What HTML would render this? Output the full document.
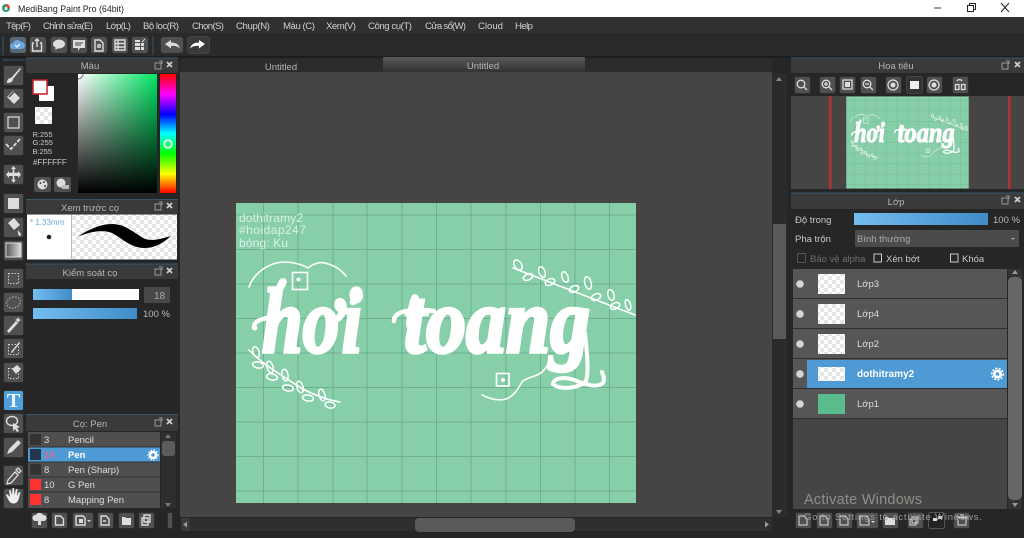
<!DOCTYPE html>
<html><head><meta charset="utf-8"><title>MediBang Paint Pro</title>
<style>html,body{margin:0;padding:0;background:#222;overflow:hidden}svg{display:block}
text{font-family:"Liberation Sans","Noto Sans CJK SC",sans-serif;font-size:9.5px;fill:#c9c9c9}
.t{text-anchor:middle;fill:#b5b5b5}.m{fill:#d0d0d0;font-size:9.6px}.w{fill:#ddd}
.i{fill:none;stroke:#ddd;stroke-width:1.4}.f{fill:#ddd}</style></head><body>
<svg xmlns="http://www.w3.org/2000/svg" width="1024" height="538" viewBox="0 0 1024 538">
<defs>
<pattern id="ch" width="8" height="8" patternUnits="userSpaceOnUse"><rect width="8" height="8" fill="#fff"/><rect width="4" height="4" fill="#e6e6e6"/><rect x="4" y="4" width="4" height="4" fill="#e6e6e6"/></pattern>
<linearGradient id="bl" x1="0" x2="1" y1="0" y2="0"><stop offset="0" stop-color="#74bdf0"/><stop offset="1" stop-color="#3f8cc8"/></linearGradient>
<linearGradient id="sv1" x1="0" x2="1" y1="0" y2="0"><stop offset="0" stop-color="#fff"/><stop offset="1" stop-color="#00e765"/></linearGradient>
<linearGradient id="sv2" x1="0" x2="0" y1="0" y2="1"><stop offset="0" stop-color="#000" stop-opacity="0"/><stop offset="1" stop-color="#000"/></linearGradient>
<linearGradient id="hue" x1="0" x2="0" y1="0" y2="1"><stop offset="0" stop-color="#f00"/><stop offset=".17" stop-color="#f0f"/><stop offset=".34" stop-color="#00f"/><stop offset=".5" stop-color="#0ff"/><stop offset=".67" stop-color="#0f0"/><stop offset=".84" stop-color="#ff0"/><stop offset="1" stop-color="#f00"/></linearGradient>
<linearGradient id="gr" x1="0" x2="1" y1="0" y2="0"><stop offset="0" stop-color="#555"/><stop offset="1" stop-color="#ddd"/></linearGradient>
<linearGradient id="tab" x1="0" x2="0" y1="0" y2="1"><stop offset="0" stop-color="#585858"/><stop offset="1" stop-color="#333"/></linearGradient>
<symbol id="art" viewBox="0 0 400 300" width="400" height="300" overflow="hidden">
<rect width="400" height="300" fill="#87cfa9"/>
<g stroke="#6cb28f" stroke-width="1" fill="none">
<path d="M27.500 0V300M62 0V300M97 0V300M131 0V300M166 0V300M200.500 0V300M235 0V300M270 0V300M304.500 0V300M339 0V300M373.500 0V300"/>
<path d="M0 12H400M0 46.500H400M0 81H400M0 115.500H400M0 150H400M0 184.500H400M0 219H400M0 253.500H400M0 288H400"/>
</g>
<g fill="none" stroke="#fff" stroke-width="1.600" stroke-linecap="round">
<path d="M13 84C18 70 32 60 47 59C57 59 65 61 72 65C78 60 86 58 92 61C100 63 106 68 110 73"/>
<rect x="56.500" y="69.500" width="15" height="17"/>
<path d="M246 192C254 196 263 198 270 196C278 193 282 186 286 179C290 174 302 174 307 168C310 165 312 162 312 160"/>
<rect x="260.500" y="170.500" width="12.500" height="12.500"/>
<path d="M13 147C25 160 45 172 65 185C78 192 92 197 104 199"/>
<g stroke-width="1.500">
<ellipse cx="20" cy="149" rx="3" ry="5.500" transform="rotate(-20 20 149)"/><ellipse cx="22" cy="162" rx="5.500" ry="3" transform="rotate(10 22 162)"/>
<ellipse cx="34" cy="164" rx="3" ry="6" transform="rotate(-15 34 164)"/><ellipse cx="36" cy="174" rx="5.500" ry="3" transform="rotate(10 36 174)"/>
<ellipse cx="49" cy="172" rx="3" ry="6" transform="rotate(-10 49 172)"/><ellipse cx="52" cy="185" rx="5.500" ry="3" transform="rotate(10 52 185)"/>
<ellipse cx="64" cy="184" rx="3" ry="6" transform="rotate(-15 64 184)"/><ellipse cx="72" cy="195" rx="5.500" ry="3" transform="rotate(10 72 195)"/>
<ellipse cx="86" cy="192" rx="3" ry="6" transform="rotate(-15 86 192)"/><ellipse cx="94" cy="202" rx="5" ry="3" transform="rotate(10 94 202)"/>
</g>
<path d="M277 65L399 112"/>
<g stroke-width="1.500">
<ellipse cx="282" cy="62" rx="3.500" ry="5.500" transform="rotate(-35 282 62)"/><ellipse cx="292" cy="74" rx="5" ry="3" transform="rotate(-25 292 74)"/>
<ellipse cx="306" cy="69" rx="3" ry="5.500" transform="rotate(-20 306 69)"/><ellipse cx="314" cy="79" rx="5" ry="3" transform="rotate(-25 314 79)"/>
<ellipse cx="329" cy="74" rx="3" ry="5.500" transform="rotate(-20 329 74)"/><ellipse cx="338" cy="86" rx="5" ry="3" transform="rotate(-25 338 86)"/>
<ellipse cx="352" cy="80" rx="3.200" ry="6.500" transform="rotate(-15 352 80)"/><ellipse cx="360" cy="94" rx="5" ry="3" transform="rotate(-25 360 94)"/>
<ellipse cx="375" cy="92" rx="3" ry="5.500" transform="rotate(-15 375 92)"/><ellipse cx="379" cy="103" rx="5" ry="3" transform="rotate(-25 379 103)"/>
<ellipse cx="392" cy="102" rx="2.500" ry="5.500" transform="rotate(-15 392 102)"/>
</g>
<!-- flourishes -->
<path d="M18 125C17 118 26 115 40 114" stroke-width="4.500"/>
<circle cx="19" cy="125" r="2.500" fill="#fff" stroke="none"/>
<path d="M47 79C40 90 36 105 35 125" stroke-width="8"/>
<path d="M158 118C158 110 168 105 198 108" stroke-width="4.500"/>
<path d="M179 95C176 103 175 110 174 122" stroke-width="8"/>
<path d="M349 130C351 150 353 168 350 178C343 186 322 187 317 181C318 174 330 174 338 177C346 180 360 186 367 180C369 176 367 172 366 169" stroke-width="4"/>
</g>
<g fill="#fff"><circle cx="62.500" cy="76.500" r="2"/><circle cx="267" cy="177" r="2"/><circle cx="117" cy="99" r="3.300"/></g>
</symbol>
</defs>

<rect width="1024" height="538" fill="#222"/>
<!-- title bar -->
<rect width="1024" height="17" fill="#fff"/><rect y="17" width="1024" height="1" fill="#333"/>
<circle cx="6" cy="8" r="4" fill="#2f9b6a"/><path d="M6 4a4 4 0 0 1 4 4H6z" fill="#e2533b"/><circle cx="6" cy="8.500" r="1.500" fill="#fff"/>
<text x="18" y="12" style="font-size:9.5px;fill:#222" textLength="106" lengthAdjust="spacingAndGlyphs">MediBang Paint Pro (64bit)</text>
<path d="M934 8H941" stroke="#333" stroke-width="1"/><path d="M967.500 5.500h6v6h-6zM969.500 5.500v-2h6v6h-2" fill="none" stroke="#222" stroke-width="1"/><path d="M1001 3L1009 12M1009 3L1001 12" stroke="#222" stroke-width="1"/>
<!-- menu -->
<rect y="18" width="1024" height="15" fill="#303030"/><rect y="33" width="1024" height="1" fill="#292929"/>
<g class="menu">
<text class="m" x="6" y="29" textLength="25">Tệp(F)</text><text class="m" x="43" y="29" textLength="50">Chỉnh sửa(E)</text><text class="m" x="106" y="29" textLength="25">Lớp(L)</text><text class="m" x="143" y="29" textLength="36">Bộ lọc(R)</text><text class="m" x="192" y="29" textLength="32">Chọn(S)</text><text class="m" x="236" y="29" textLength="34">Chụp(N)</text><text class="m" x="283" y="29" textLength="32">Màu (C)</text><text class="m" x="326" y="29" textLength="30">Xem(V)</text><text class="m" x="368" y="29" textLength="44">Công cụ(T)</text><text class="m" x="425" y="29" textLength="41">Cửa sổ(W)</text><text class="m" x="478" y="29" textLength="25">Cloud</text><text class="m" x="515" y="29" textLength="18">Help</text>
</g>
<!-- toolbar -->
<rect y="34" width="1024" height="22" fill="#2a2a2a"/><rect y="56" width="1024" height="2" fill="#1d1d1d"/>
<path d="M3 36V55M153 36V55" stroke="#36566e" stroke-width="1"/>
<g fill="#505050" stroke="#2e2e2e">
<rect x="9.500" y="36.500" width="17" height="17" rx="3" fill="#5a6672"/><rect x="29.500" y="36.500" width="17" height="17" rx="3"/><rect x="50.500" y="36.500" width="17" height="17" rx="3"/><rect x="70.500" y="36.500" width="17" height="17" rx="3"/><rect x="90.500" y="36.500" width="17" height="17" rx="3"/><rect x="111.500" y="36.500" width="17" height="17" rx="3"/><rect x="131.500" y="36.500" width="17" height="17" rx="3"/><rect x="160.500" y="36.500" width="23" height="17" rx="3"/><rect x="187.500" y="36.500" width="22" height="17" rx="3" fill="#3a3a3a" stroke="#444"/>
</g>
<path d="M13 49a3 3 0 0 1 0-6a4.500 4.500 0 0 1 8-1a3.500 3.500 0 0 1 1 7z" fill="#6aa7e0"/><path d="M15 45l2 2 3-3" stroke="#fff" stroke-width="1.200" fill="none"/>
<path class="i" d="M34 43h-1.500v8h9v-8H40M37 47V39M35 41l2-2 2 2"/>
<ellipse cx="59" cy="44" rx="6" ry="4.500" class="f"/><path d="M56 47l-1 3 4-2z" class="f"/>
<path d="M73 40h12v8h-5l-2 3v-3h-5z" class="f"/><path d="M75 43h8M75 45h6" stroke="#444"/>
<path class="i" d="M95 40h5l3 3v8h-8zM97 45h4M97 47h4" stroke-width="1"/>
<path class="i" d="M115 40h10v10h-10zM115 43.500h10M115 47h10M118 40v10" stroke-width="1"/>
<path d="M135 43h5v3h-5zM141 43h3v3h-3zM135 47h5v3h-5zM141 47h3v3h-3zM135 40h5v2h-5z" class="f"/><path d="M142 42l3-3" stroke="#ddd"/>
<path d="M165 44l6-4v2.500c5 0 8 2 9 6c-2-2-5-3-9-2.500v2.500z" class="f"/>
<path d="M205 44l-6-4v2.500c-5 0-8 2-9 6c2-2 5-3 9-2.500v2.500z" fill="#fff"/>

<!-- left tools -->
<rect x="0" y="58" width="26" height="480" fill="#262626"/>
<path d="M3 60H25" stroke="#36566e"/>
<g fill="#505050" stroke="#2e2e2e">
<rect x="3.500" y="65.500" width="20" height="20" rx="2"/><rect x="3.500" y="88.500" width="20" height="20" rx="2"/><rect x="3.500" y="112.500" width="20" height="20" rx="2"/><rect x="3.500" y="135.500" width="20" height="20" rx="2"/><rect x="3.500" y="164.500" width="20" height="20" rx="2"/><rect x="3.500" y="193.500" width="20" height="20" rx="2"/><rect x="3.500" y="217.500" width="20" height="20" rx="2"/><rect x="3.500" y="240.500" width="20" height="20" rx="2"/><rect x="3.500" y="268.500" width="20" height="20" rx="2"/><rect x="3.500" y="292.500" width="20" height="20" rx="2"/><rect x="3.500" y="315.500" width="20" height="20" rx="2"/><rect x="3.500" y="338.500" width="20" height="20" rx="2"/><rect x="3.500" y="362.500" width="20" height="20" rx="2"/><rect x="3.500" y="390.500" width="20" height="20" rx="2" fill="#4f9fda"/><rect x="3.500" y="413.500" width="20" height="20" rx="2"/><rect x="3.500" y="437.500" width="20" height="20" rx="2"/><rect x="3.500" y="465.500" width="20" height="20" rx="2"/><rect x="3.500" y="488.500" width="20" height="20" rx="2"/>
</g>
<path d="M7 83c0-4 2-5 4-5l9-10 1 1-8 10c0 3-3 4-6 4z" class="f"/>
<path d="M13 91l7 7-6 6-7-7z" class="f"/><path d="M9 97l5-5" stroke="#484848" stroke-width="1.500"/>
<rect x="8" y="117" width="11" height="11" fill="none" stroke="#ddd" stroke-width="1.200"/>
<path d="M6 144l5 5 9-10" fill="none" stroke="#ddd" stroke-width="1.800" stroke-dasharray="4 1.500"/>
<path d="M13.500 166l2.500 3h-1.700v3.700h3.700V171l3 3.500-3 3.500v-2h-3.700v3.700H16l-2.500 3-2.500-3h1.700v-3.700H9V178l-3-3.500 3-3.500v1.700h3.700V169H11z" class="f"/>
<rect x="8" y="198" width="11" height="11" class="f"/>
<path d="M8 223l6-5 6 7-6 5z" class="f"/><path d="M18 230c1 2 3 3 3 5s-4 1-3-5z" fill="#ddd"/>
<rect x="6" y="243" width="15" height="14" fill="url(#gr)" stroke="#ddd"/>
<rect x="8.500" y="273.500" width="10" height="10" fill="none" stroke="#ccc" stroke-dasharray="1.500 1.500"/>
<ellipse cx="13.500" cy="302.500" rx="7" ry="5.500" fill="none" stroke="#bbb" stroke-dasharray="1.500 1.500" transform="rotate(-20 13.500 302.500)"/>
<path d="M7 331l9-10 2 2-9 10z" class="f"/><path d="M18 317l1 2 2 1-2 1-1 2-1-2-2-1 2-1z" class="f"/>
<rect x="8.500" y="344.500" width="10" height="10" fill="none" stroke="#ccc" stroke-dasharray="1.500 1.500"/><path d="M11 352l8-10 1 1-8 10z" class="f"/>
<rect x="8.500" y="368.500" width="10" height="10" fill="none" stroke="#ccc" stroke-dasharray="1.500 1.500"/><path d="M12 369l5-4 4 4-5 5z" class="f"/>
<text x="13.500" y="407" style="font-family:'Liberation Serif',serif;font-size:20px;font-weight:bold;fill:#e9f4fb;text-anchor:middle">T</text>
<ellipse cx="12" cy="421" rx="5.500" ry="4.500" class="i"/><path d="M13 423l7 4-3 1 2 3-2 1-2-3-2 2z" class="f"/>
<path d="M7 454l2-5 9-9 3 3-9 9z" class="f"/>
<path d="M7 484l1-4 7-8 3 3-7 8zM16 470l2-2 3 3-2 2z" fill="none" stroke="#ddd" stroke-width="1.300"/>
<path d="M8 499l-2-4 1-1 3 3-1-7h1.500l1.500 5 .5-7h1.500l.5 7 1.500-6h1.500l-.5 7 2-4 1.500.5-2 7c-1 3-3 4-5 4s-4-1-5.500-4.500z" fill="#eee"/>

<!-- Colour panel -->
<rect x="26" y="58" width="154" height="480" fill="#262626"/>
<rect x="26" y="58" width="152" height="15" fill="#3a3a3a"/><path d="M26 58H178" stroke="#36566e"/>
<text class="t" x="90" y="69">Màu</text>
<path d="M155 63h6v6h-6z M159 61l3 0v3" fill="none" stroke="#999"/><path d="M167 62l5 5M172 62l-5 5" stroke="#ccc" stroke-width="1.800"/>
<rect x="39" y="86" width="15" height="15" fill="#fff"/>
<rect x="33" y="80" width="14" height="14" fill="#fff" stroke="#c5202a" stroke-width="1.500"/>
<rect x="35" y="107" width="17" height="17" fill="url(#ch)"/>
<text x="32.500" y="137" style="font-size:7.500px">R:255</text><text x="32.500" y="145" style="font-size:7.500px">G:255</text><text x="32.500" y="154" style="font-size:7.500px">B:255</text>
<text x="33" y="165" style="font-size:8px">#FFFFFF</text>
<rect x="34" y="177" width="17" height="15" rx="2" fill="#505050"/><rect x="54" y="177" width="17" height="15" rx="2" fill="#505050"/>
<circle cx="42.500" cy="184.500" r="5" class="f"/><circle cx="40.500" cy="183" r="1" fill="#444"/><circle cx="44" cy="182" r="1" fill="#444"/><circle cx="45" cy="186" r="1" fill="#444"/>
<circle cx="61" cy="183" r="4.500" class="f"/><rect x="62" y="185" width="7" height="4" fill="#bbb"/>
<rect x="78" y="74" width="79" height="119" fill="url(#sv1)"/><rect x="78" y="74" width="79" height="119" fill="url(#sv2)"/>
<path d="M78 79a5 5 0 0 0 5-5" stroke="#777" fill="none"/>
<rect x="160" y="74" width="16" height="119" fill="url(#hue)"/>
<circle cx="168" cy="144" r="3.800" fill="none" stroke="#d5f5df" stroke-width="2"/>
<!-- brush preview -->
<rect x="26" y="199" width="152" height="15" fill="#3a3a3a"/><path d="M26 199.500H178" stroke="#36566e"/>
<text class="t" x="90" y="211">Xem trước cọ</text>
<path d="M155 204h6v6h-6z M159 202l3 0v3" fill="none" stroke="#999"/><path d="M167 203l5 5M172 203l-5 5" stroke="#ccc" stroke-width="1.800"/>
<rect x="27" y="214.500" width="150" height="45" fill="#fff"/>
<rect x="72" y="214.500" width="105" height="45" fill="url(#ch)"/><path d="M71.500 215V260" stroke="#bbb"/>
<text x="30" y="225" style="font-size:8px;fill:#6aa7da">* 1.33mm</text>
<circle cx="49" cy="237" r="2.300" fill="#222"/>
<path d="M78 236.500C88 230 100 224 112 224C125 224 133 232 143 238C151 242 160 239 171 236C163 243 155 248 145 248C130 248 122 238 112 233C102 229 90 232 78 236.500z" fill="#000"/>
<!-- brush control -->
<rect x="26" y="264" width="152" height="15" fill="#3a3a3a"/><path d="M26 264H178" stroke="#36566e"/>
<text class="t" x="90" y="276">Kiểm soát cọ</text>
<path d="M155 269h6v6h-6z M159 267l3 0v3" fill="none" stroke="#999"/><path d="M167 268l5 5M172 268l-5 5" stroke="#ccc" stroke-width="1.800"/>
<rect x="33" y="289" width="106" height="11" fill="#fff"/><rect x="33" y="289" width="39" height="11" fill="url(#bl)"/>
<rect x="144" y="287" width="26" height="16" rx="1" fill="#484848"/><text x="154" y="299" style="fill:#aaa;font-size:10px">18</text>
<rect x="33" y="308" width="104" height="11" fill="url(#bl)"/>
<text x="143" y="317" style="fill:#bbb;font-size:9.500px">100 %</text>
<!-- brush list -->
<rect x="26" y="415" width="152" height="16" fill="#3a3a3a"/><path d="M26 414.500H178" stroke="#36566e"/>
<text class="t" x="90" y="427">Cọ: Pen</text>
<path d="M155 420h6v6h-6z M159 418l3 0v3" fill="none" stroke="#999"/><path d="M167 419l5 5M172 419l-5 5" stroke="#ccc" stroke-width="1.800"/>
<rect x="28" y="432" width="132" height="76" fill="#4f4f4f"/>
<rect x="28" y="447" width="132" height="15" fill="#4d9ad5"/>
<path d="M28 447H160M28 462H160M28 477H160M28 492H160" stroke="#333"/>
<g fill="#333"><rect x="30" y="434" width="11" height="11"/><rect x="30" y="449" width="11" height="11" fill="#26364a"/><rect x="30" y="464" width="11" height="11"/></g>
<g fill="#f33"><rect x="30" y="479" width="11" height="11"/><rect x="30" y="494" width="11" height="11"/></g>
<g style="font-size:9.500px">
<text x="44" y="443" class="w">3</text><text x="68" y="443" class="w">Pencil</text>
<text x="44" y="458" style="fill:#e8688a;font-weight:bold">10</text><text x="68" y="458" style="fill:#fff;font-weight:bold">Pen</text>
<text x="44" y="473" class="w">8</text><text x="68" y="473" class="w">Pen (Sharp)</text>
<text x="44" y="488" class="w">10</text><text x="68" y="488" class="w">G Pen</text>
<text x="44" y="503" class="w">8</text><text x="68" y="503" class="w">Mapping Pen</text>
</g>
<circle cx="153" cy="455" r="3" fill="none" stroke="#fff" stroke-width="2.500"/><circle cx="153" cy="455" r="5" fill="none" stroke="#fff" stroke-width="1.200" stroke-dasharray="1.500 1.500"/>
<rect x="161" y="432" width="15" height="76" fill="#2e2e2e"/><rect x="162" y="441" width="13" height="15" rx="3" fill="#5c5c5c"/>
<path d="M168 434l3 4h-6zM168 507l3-4h-6z" fill="#777"/>
<g fill="#505050" stroke="#2e2e2e"><rect x="31.500" y="512.500" width="16" height="16" rx="2"/><rect x="51.500" y="512.500" width="16" height="16" rx="2"/><rect x="72.500" y="512.500" width="21" height="16" rx="2"/><rect x="97.500" y="512.500" width="16" height="16" rx="2"/><rect x="118.500" y="512.500" width="16" height="16" rx="2"/><rect x="138.500" y="512.500" width="16" height="16" rx="2"/><rect x="167.500" y="512.500" width="5" height="16" rx="1"/></g>
<path d="M35 521a3 3 0 0 1 1-6a4 4 0 0 1 7 0a3 3 0 0 1 1 6h-3v4h-3v-4z" class="f"/>
<path class="i" d="M55.500 516h5l3 3v6h-8z" stroke-width="1"/>
<path class="i" d="M76 516h7l2 2v7h-9z" stroke-width="1"/><path d="M79 519h4v4h-4z" class="f"/><path d="M87 520h4l-2 2z" class="f"/>
<path class="i" d="M101 516h5l3 3v6h-8zM103 521h3" stroke-width="1"/>
<path d="M122 517h3l1 1h5v7h-9z" class="f"/>
<path class="i" d="M144 515h6v7h-6zM142 518h6v7h-6z" stroke-width="1"/>

<!-- canvas area -->
<rect x="180" y="58" width="608" height="480" fill="#262626"/>
<rect x="180" y="72" width="592" height="445" fill="#474543"/>
<rect x="181" y="58" width="202" height="14" fill="#2c2c2c"/><rect x="383" y="57" width="202" height="15" fill="url(#tab)"/><rect x="585" y="58" width="187" height="14" fill="#2c2c2c"/>
<text class="t" x="281" y="70">Untitled</text><text class="t" x="483" y="69">Untitled</text>
<use href="#art" x="236" y="203"/>
<text x="239" y="222" style="font-size:12px;fill:#d8f0e4" textLength="64">dothitramy2</text>
<text x="239" y="234" style="font-size:12px;fill:#d8f0e4" textLength="67">#hoidap247</text>
<text x="239" y="247" style="font-size:12px;fill:#d8f0e4" textLength="49">bóng: Ku</text>
<text x="262" y="352" textLength="100" lengthAdjust="spacingAndGlyphs" style="font-family:'Liberation Serif',serif;font-style:italic;font-weight:bold;font-size:92px;fill:#fff;stroke:#fff;stroke-width:3.500">hơi</text>
<text x="404" y="352" textLength="186" lengthAdjust="spacingAndGlyphs" style="font-family:'Liberation Serif',serif;font-style:italic;font-weight:bold;font-size:92px;fill:#fff;stroke:#fff;stroke-width:3.500">toang</text>
<!-- scrollbars -->
<rect x="772" y="74" width="15" height="443" fill="#2b2b2b"/><rect x="773" y="224" width="13" height="115" fill="#5a5a5a"/>
<path d="M779 77l3 4h-6zM779 514l3-4h-6z" fill="#888"/>
<rect x="181" y="518" width="591" height="13" fill="#2f2f2f"/><rect x="415" y="518" width="160" height="14" rx="4" fill="#5a5a5a"/>
<rect x="181" y="518" width="9" height="13" fill="#3a3a3a"/><path d="M183 524.500l4-3v6z" fill="#999"/><path d="M769 524.500l-4-3v6z" fill="#999"/>

<!-- navigator -->
<rect x="788" y="58" width="236" height="480" fill="#262626"/>
<rect x="791" y="58" width="233" height="15" fill="#3a3a3a"/><path d="M791 58H1024" stroke="#36566e"/>
<text class="t" x="896" y="69">Hoa tiêu</text>
<path d="M1002 63h6v6h-6z M1006 61l3 0v3" fill="none" stroke="#999"/><path d="M1015 62l5 5M1020 62l-5 5" stroke="#ccc" stroke-width="1.800"/>
<g fill="#505050" stroke="#2e2e2e"><rect x="794.500" y="76.500" width="16" height="17" rx="2"/><rect x="819.500" y="76.500" width="16" height="17" rx="2"/><rect x="839.500" y="76.500" width="16" height="17" rx="2"/><rect x="860.500" y="76.500" width="16" height="17" rx="2"/><rect x="885.500" y="76.500" width="16" height="17" rx="2"/><rect x="906.500" y="76.500" width="16" height="17" rx="2" fill="#333" stroke="#444"/><rect x="926.500" y="76.500" width="16" height="17" rx="2"/><rect x="952.500" y="76.500" width="16" height="17" rx="2"/></g>
<g fill="none" stroke="#ddd" stroke-width="1.300"><circle cx="801" cy="84" r="3.800"/><path d="M804 87l3 3"/><circle cx="826" cy="84" r="3.800"/><path d="M829 87l3 3M824 84h4M826 82v4"/><path d="M843 80h9v9h-9z"/><circle cx="867" cy="84" r="3.800"/><path d="M870 87l3 3M865 84h4"/><circle cx="893" cy="85" r="5"/><circle cx="934" cy="85" r="5"/><path d="M957 81a3 3 0 0 1 5 0M955.500 84.500h3.500v5h-3.500zM961.500 84.500h3.500v5h-3.500z"/></g>
<rect x="845" y="82" width="5" height="5" fill="#ddd"/><circle cx="893" cy="85" r="2.500" fill="#ddd"/><rect x="910" y="81" width="9" height="8" fill="#eee"/><circle cx="934" cy="85" r="2.500" fill="#ddd"/>
<rect x="791" y="96" width="233" height="93" fill="#474543"/>
<rect x="829" y="96" width="2.500" height="93" fill="#b53232"/><rect x="1008" y="96" width="2.500" height="93" fill="#b53232"/>
<svg x="846" y="96.500" width="123" height="92" viewBox="0 0 400 300"><use href="#art"/>
<text x="26" y="149" textLength="100" lengthAdjust="spacingAndGlyphs" style="font-family:'Liberation Serif',serif;font-style:italic;font-weight:bold;font-size:92px;fill:#fff;stroke:#fff;stroke-width:3.500">hơi</text>
<text x="168" y="149" textLength="186" lengthAdjust="spacingAndGlyphs" style="font-family:'Liberation Serif',serif;font-style:italic;font-weight:bold;font-size:92px;fill:#fff;stroke:#fff;stroke-width:3.500">toang</text></svg>
<!-- layers -->
<rect x="791" y="193" width="233" height="16" fill="#3a3a3a"/><path d="M791 193H1024" stroke="#36566e"/>
<text class="t" x="896" y="205">Lớp</text>
<path d="M1002 198h6v6h-6z M1006 196l3 0v3" fill="none" stroke="#999"/><path d="M1015 197l5 5M1020 197l-5 5" stroke="#ccc" stroke-width="1.800"/>
<text x="795" y="223">Độ trong</text>
<rect x="854" y="213" width="134" height="12" fill="url(#bl)"/><text x="993" y="223" style="fill:#bbb">100 %</text>
<text x="795" y="242">Pha trộn</text>
<rect x="855" y="230" width="164" height="17" rx="1" fill="#4b4b4b"/><text x="857" y="242" style="fill:#aaa">Bình thường</text><path d="M1011 238l4 0-2 2z" fill="#aaa"/>
<rect x="797.500" y="253.500" width="8" height="9" fill="none" stroke="#555"/><text x="810" y="262" style="fill:#6e6e6e">Bảo vệ alpha</text>
<rect x="874" y="254" width="7.500" height="8" fill="none" stroke="#ccc"/><text x="886" y="262">Xén bớt</text>
<rect x="950.500" y="254" width="7.500" height="8" fill="none" stroke="#ccc"/><text x="962" y="262">Khóa</text>
<rect x="793" y="269" width="214" height="240" fill="#474543"/>
<g fill="#565656"><rect x="793" y="269" width="214" height="29"/><rect x="793" y="299" width="214" height="29"/><rect x="793" y="329" width="214" height="29"/><rect x="793" y="359" width="214" height="29"/><rect x="793" y="389" width="214" height="29"/></g>
<rect x="807" y="360" width="200" height="28" fill="#4d9ad5"/>
<path d="M793 298.500H1007M793 328.500H1007M793 358.500H1007M793 388.500H1007M793 418.500H1007" stroke="#2f2f2f"/>
<g fill="#d5d5d5"><circle cx="800" cy="284" r="3.800"/><circle cx="800" cy="314" r="3.800"/><circle cx="800" cy="344" r="3.800"/><circle cx="800" cy="374" r="3.800"/><circle cx="800" cy="404" r="3.800"/></g>
<rect x="818" y="274" width="27" height="20" fill="url(#ch)"/><rect x="818" y="304" width="27" height="20" fill="url(#ch)"/><rect x="818" y="334" width="27" height="20" fill="url(#ch)"/><rect x="818" y="367" width="27" height="14" fill="url(#ch)"/><rect x="818" y="394" width="27" height="20" fill="#5abb8c"/>
<text x="857" y="287" class="w">Lớp3</text><text x="857" y="317" class="w">Lớp4</text><text x="857" y="347" class="w">Lớp2</text>
<text x="857" y="377" style="fill:#fff;font-weight:bold;font-size:10px">dothitramy2</text><text x="857" y="407" class="w">Lớp1</text>
<circle cx="997.500" cy="374" r="3.200" fill="none" stroke="#fff" stroke-width="2.800"/><circle cx="997.500" cy="374" r="5.700" fill="none" stroke="#fff" stroke-width="1.500" stroke-dasharray="2 1.500"/>
<rect x="1008" y="269" width="14" height="240" fill="#333"/><rect x="1008" y="277" width="14" height="223" rx="5" fill="#666"/>
<path d="M1015 270l3 4h-6zM1015 507l3-4h-6z" fill="#999"/>
<g fill="#505050" stroke="#2e2e2e"><rect x="795.500" y="512.500" width="16" height="16" rx="2"/><rect x="816.500" y="512.500" width="16" height="16" rx="2"/><rect x="836.500" y="512.500" width="16" height="16" rx="2"/><rect x="856.500" y="512.500" width="22" height="16" rx="2"/><rect x="882.500" y="512.500" width="16" height="16" rx="2"/><rect x="907.500" y="512.500" width="16" height="16" rx="2"/><rect x="928.500" y="512.500" width="16" height="16" rx="2" fill="#222" stroke="#555"/><rect x="953.500" y="512.500" width="16" height="16" rx="2"/></g>
<g fill="none" stroke="#ddd" stroke-width="1"><path d="M799 516h5l3 3v6h-8zM820 516h5l3 3v6h-8zM840 516h5l3 3v6h-8zM860 516h6l3 3v6h-9zM912 517h6v6h-6zM910 519h6v6h-6zM958 518h8v7h-8zM956 517h12M960 515h4"/></g>
<path d="M885 517h3l1 1h6v7h-10zM933 518h4v3h-4zM938 516h4v3h-4z" class="f"/><path d="M871 521h4l-2 2z" class="f"/>
<!-- watermark -->
<text x="804" y="504" style="font-size:14.500px;fill:#8f8e8c" textLength="118">Activate Windows</text>
<text x="804" y="520" style="font-size:9.500px;fill:#9b9a98" textLength="178">Go to Settings to activate Windows.</text>
</svg>
</body></html>
